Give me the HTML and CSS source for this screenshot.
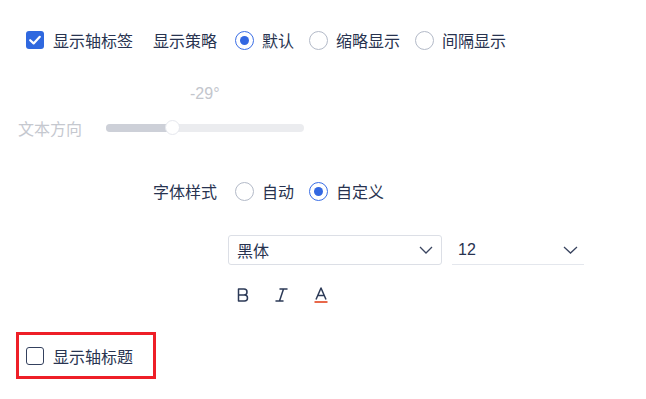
FILE: index.html
```html
<!DOCTYPE html>
<html lang="zh">
<head>
<meta charset="utf-8">
<link rel="stylesheet" href="styles.css">
</head>
<body>
<div class="page">
  <div class="row row-top">
    <span class="checkbox checked">
      <svg viewBox="0 0 18 18" width="18" height="18"><path d="M4.2 9.2 L7.6 12.4 L13.8 5.8" fill="none" stroke="#fff" stroke-width="2.2" stroke-linecap="round" stroke-linejoin="round"/></svg>
    </span>
    <span class="label lbl-axis">显示轴标签</span>
    <span class="label lbl-strategy">显示策略</span>
    <span class="radio checked"></span><span class="label opt">默认</span>
    <span class="radio"></span><span class="label opt">缩略显示</span>
    <span class="radio"></span><span class="label opt">间隔显示</span>
  </div>

  <div class="angle">-29°</div>
  <div class="row row-slider">
    <span class="label disabled">文本方向</span>
    <div class="track">
      <div class="fill"></div>
      <div class="thumb"></div>
    </div>
  </div>

  <div class="row row-font">
    <span class="label lbl-font">字体样式</span>
    <span class="radio"></span><span class="label opt">自动</span>
    <span class="radio checked"></span><span class="label opt">自定义</span>
  </div>

  <div class="row row-select">
    <div class="select boxed">
      <span class="label">黑体</span>
      <svg class="chev" viewBox="0 0 14 8" width="14" height="8"><path d="M1 1 L7 7 L13 1" fill="none" stroke="#3a4560" stroke-width="1.3"/></svg>
    </div>
    <div class="select underline">
      <span class="num">12</span>
      <svg class="chev" viewBox="0 0 15 8" width="15" height="8"><path d="M1 1 L7.5 7 L14 1" fill="none" stroke="#3a4560" stroke-width="1.3"/></svg>
    </div>
  </div>

  <div class="row row-icons">
    <svg class="ico" viewBox="0 0 12 14" width="12" height="14"><path d="M1.5 1 H7 A3 3 0 0 1 7 7 H1.5 Z M1.5 7 H7.5 A3 3 0 0 1 7.5 13 H1.5 Z" fill="none" stroke="#2c3a57" stroke-width="1.5" stroke-linejoin="round"/></svg>
    <svg class="ico" viewBox="0 0 13 14" width="13" height="14"><path d="M5 1 H12 M1 13 H8 M8.5 1 L4.5 13" fill="none" stroke="#2c3a57" stroke-width="1.5" stroke-linecap="round"/></svg>
    <svg class="ico" viewBox="0 0 14 16" width="14" height="16"><path d="M2 12.5 L7 1 L12 12.5 M3.8 8.5 H10.2" fill="none" stroke="#2c3a57" stroke-width="1.5" stroke-linejoin="round"/><path d="M0.5 15 H13.5" stroke="#e8684a" stroke-width="2"/></svg>
  </div>

  <div class="row-title">
    <div class="highlight">
      <span class="checkbox"></span>
      <span class="label">显示轴标题</span>
    </div>
  </div>
</div>
</body>
</html>
```
FILE: styles.css
```css
html, body {
  margin: 0;
  padding: 0;
  background: #fff;
}
body {
  font-family: "Noto Sans CJK SC", "Liberation Sans", sans-serif;
  font-size: 16px;
  color: #283350;
}
.page {
  width: 646px;
  height: 399px;
  overflow: hidden;
}
.row {
  display: flex;
  align-items: center;
}
.label {
  line-height: 20px;
  white-space: nowrap;
}
.checkbox {
  width: 18px;
  height: 18px;
  box-sizing: border-box;
  border-radius: 3px;
  border: 1.5px solid #34415e;
  display: inline-flex;
  flex: none;
}
.checkbox.checked {
  background: #2f68df;
  border: none;
}
.radio {
  width: 19px;
  height: 19px;
  box-sizing: border-box;
  border-radius: 50%;
  border: 1px solid #b3bac8;
  flex: none;
  display: inline-flex;
  align-items: center;
  justify-content: center;
}
.radio.checked {
  border-color: #3a6ee6;
}
.radio.checked::after {
  content: "";
  width: 9px;
  height: 9px;
  border-radius: 50%;
  background: #3368e2;
}
.opt {
  margin-left: 8px;
  margin-right: 15px;
}
.row-top {
  margin-top: 30px;
  height: 20px;
  padding-left: 26px;
}
.lbl-axis {
  margin-left: 9px;
}
.lbl-strategy {
  margin-left: 20px;
  margin-right: 18px;
}
.angle {
  margin-top: 36px;
  padding-left: 190px;
  height: 16px;
  line-height: 16px;
  font-family: "Liberation Sans", sans-serif;
  font-size: 16px;
  color: #c3c6cd;
}
.row-slider {
  margin-top: 16px;
  height: 20px;
  padding-left: 18px;
}
.disabled {
  color: #c5c8cf;
}
.track {
  position: relative;
  margin-left: 24px;
  width: 198px;
  height: 8px;
  border-radius: 4px;
  background: #ebecef;
}
.fill {
  width: 66px;
  height: 8px;
  border-radius: 4px 0 0 4px;
  background: #cdd0d8;
}
.thumb {
  position: absolute;
  left: 59px;
  top: -4px;
  width: 15px;
  height: 15px;
  box-sizing: border-box;
  border-radius: 50%;
  background: #fff;
  border: 1.5px solid #e6e8ee;
}
.row-font {
  margin-top: 43px;
  height: 20px;
  padding-left: 153px;
}
.lbl-font {
  margin-right: 18px;
}
.row-select {
  margin-top: 34px;
  padding-left: 228px;
  height: 30px;
  align-items: stretch;
}
.select {
  box-sizing: border-box;
  display: flex;
  align-items: center;
  justify-content: space-between;
}
.boxed {
  width: 214px;
  height: 30px;
  border: 1px solid #dcdfe6;
  border-radius: 3px;
  padding: 0 8px 0 8px;
}
.underline {
  margin-left: 10px;
  width: 132px;
  height: 30px;
  border-bottom: 1px solid #e4e7ed;
  padding: 0 6px 0 6px;
}
.num {
  font-family: "Liberation Sans", sans-serif;
  font-size: 16px;
  line-height: 20px;
}
.row-icons {
  margin-top: 21px;
  height: 18px;
  padding-left: 237px;
  gap: 26px;
}
.ico {
  display: block;
}
.row-title {
  margin-top: 28px;
  padding-left: 16px;
}
.highlight {
  width: 140px;
  height: 47px;
  box-sizing: border-box;
  border: 3px solid #ee1f27;
  display: flex;
  align-items: center;
  padding-left: 7px;
}
.highlight .label {
  margin-left: 9px;
}
```
